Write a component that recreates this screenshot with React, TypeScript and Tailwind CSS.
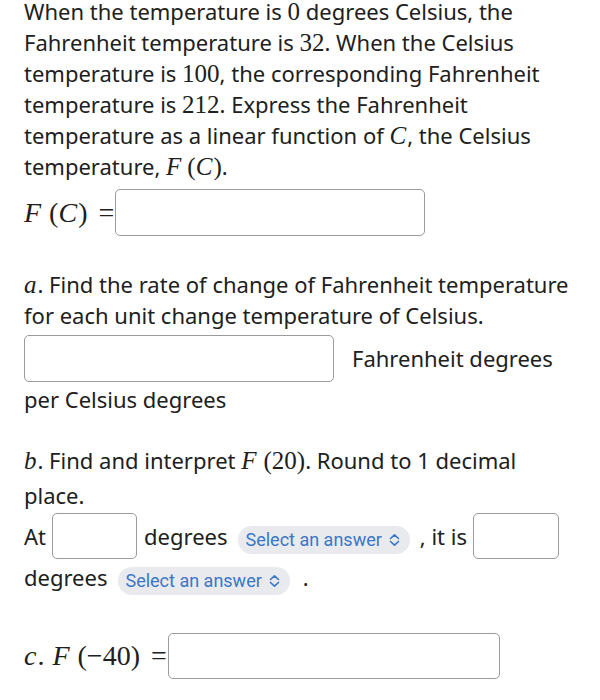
import React from 'react';

const serif = { fontFamily: '"Liberation Serif", "DejaVu Serif", serif' };

function M({ children, tall = false, big = false }: { children: React.ReactNode; tall?: boolean; big?: boolean }) {
  const size = big ? 'text-[28px]' : 'text-[25px]';
  return (
    <span className={`${size} ${tall ? 'leading-[39px]' : 'leading-none'}`} style={serif}>
      {children}
    </span>
  );
}

function V({ children }: { children: React.ReactNode }) {
  return <i className="pr-[1px]">{children}</i>;
}

function Box({ className }: { className: string }) {
  return <div className={`shrink-0 border border-[#9b9b9b] rounded-[5px] bg-white ${className}`} />;
}

function SelectPill({ className = '' }: { className?: string }) {
  return (
    <span
      className={`inline-flex items-center h-[28px] pl-[7px] pr-[9px] rounded-full bg-[#e8eaee] text-[#3a77c6] text-[18px] leading-none ${className}`}
      style={{ fontFamily: 'Roboto, "Liberation Sans", sans-serif' }}
    >
      Select an answer
      <svg className="ml-[6px]" width="13" height="14" viewBox="0 0 13 14" fill="none" stroke="#3a77c6" strokeWidth="1.7" strokeLinecap="round" strokeLinejoin="round">
        <path d="M2.5 5.5 L6.5 1.8 L10.5 5.5" />
        <path d="M2.5 8.5 L6.5 12.2 L10.5 8.5" />
      </svg>
    </span>
  );
}

export default function App() {
  return (
    <div className="w-[600px] h-[700px] overflow-hidden bg-white text-[#202020] pl-[24px] pr-[24px] text-[22px] leading-[31px]" style={{ fontFamily: '"Noto Sans", "Open Sans", sans-serif' }}>
      <p className="-mt-[4px]">
        When the temperature is <M>0</M> degrees Celsius, the Fahrenheit temperature is <M>32</M>. When the Celsius
        temperature is <M>100</M>, the corresponding Fahrenheit temperature is <M>212</M>. Express the Fahrenheit
        temperature as a linear function of <M><V>C</V></M>, the Celsius temperature,{' '}
        <M>
          <V>F</V>
          <span className="ml-[5px]">(</span>
          <V>C</V>)
        </M>
        .
      </p>

      <div className="flex items-center mt-[7px] h-[47px]">
        <M big>
          <V>F</V>
          <span className="ml-[7px]">(</span>
          <V>C</V>)<span className="ml-[11px]">=</span>
        </M>
        <Box className="ml-[1px] w-[310px] h-[47px]" />
      </div>

      <p className="mt-[33px]">
        <M><V>a</V></M>. Find the rate of change of Fahrenheit temperature for each unit change temperature of Celsius.
      </p>

      <div className="flex items-center mt-[4px] h-[47px]">
        <Box className="w-[310px] h-[47px]" />
        <span className="ml-[18px]">Fahrenheit degrees</span>
      </div>
      <p className="mt-[2px]">per Celsius degrees</p>

      <p className="mt-[26px]">
        <M tall><V>b</V></M>. Find and interpret{' '}
        <M tall>
          <V>F</V>
          <span className="ml-[6px]">(20)</span>
        </M>
        . Round to 1 decimal place.
      </p>

      <div className="flex items-center mt-[2px] h-[46px]">
        <span>At</span>
        <Box className="ml-[6px] w-[85px] h-[46px]" />
        <span className="ml-[7px]">degrees</span>
        <SelectPill className="ml-[11px] mt-[8px]" />
        <span className="ml-[10px]">, it is</span>
        <Box className="ml-[6px] w-[86px] h-[46px]" />
      </div>
      <div className="flex items-center mt-[3px] h-[31px]">
        <span>degrees</span>
        <SelectPill className="ml-[11px] mt-[6px]" />
        <span className="ml-[13px]">.</span>
      </div>

      <div className="flex items-center mt-[40px] h-[46px]">
        <M big>
          <V>c</V>.<span className="ml-[8px]"><V>F</V></span>
          <span className="ml-[7px]">(−40)</span>
          <span className="ml-[11px]">=</span>
        </M>
        <Box className="ml-[1px] w-[332px] h-[46px]" />
      </div>
    </div>
  );
}
